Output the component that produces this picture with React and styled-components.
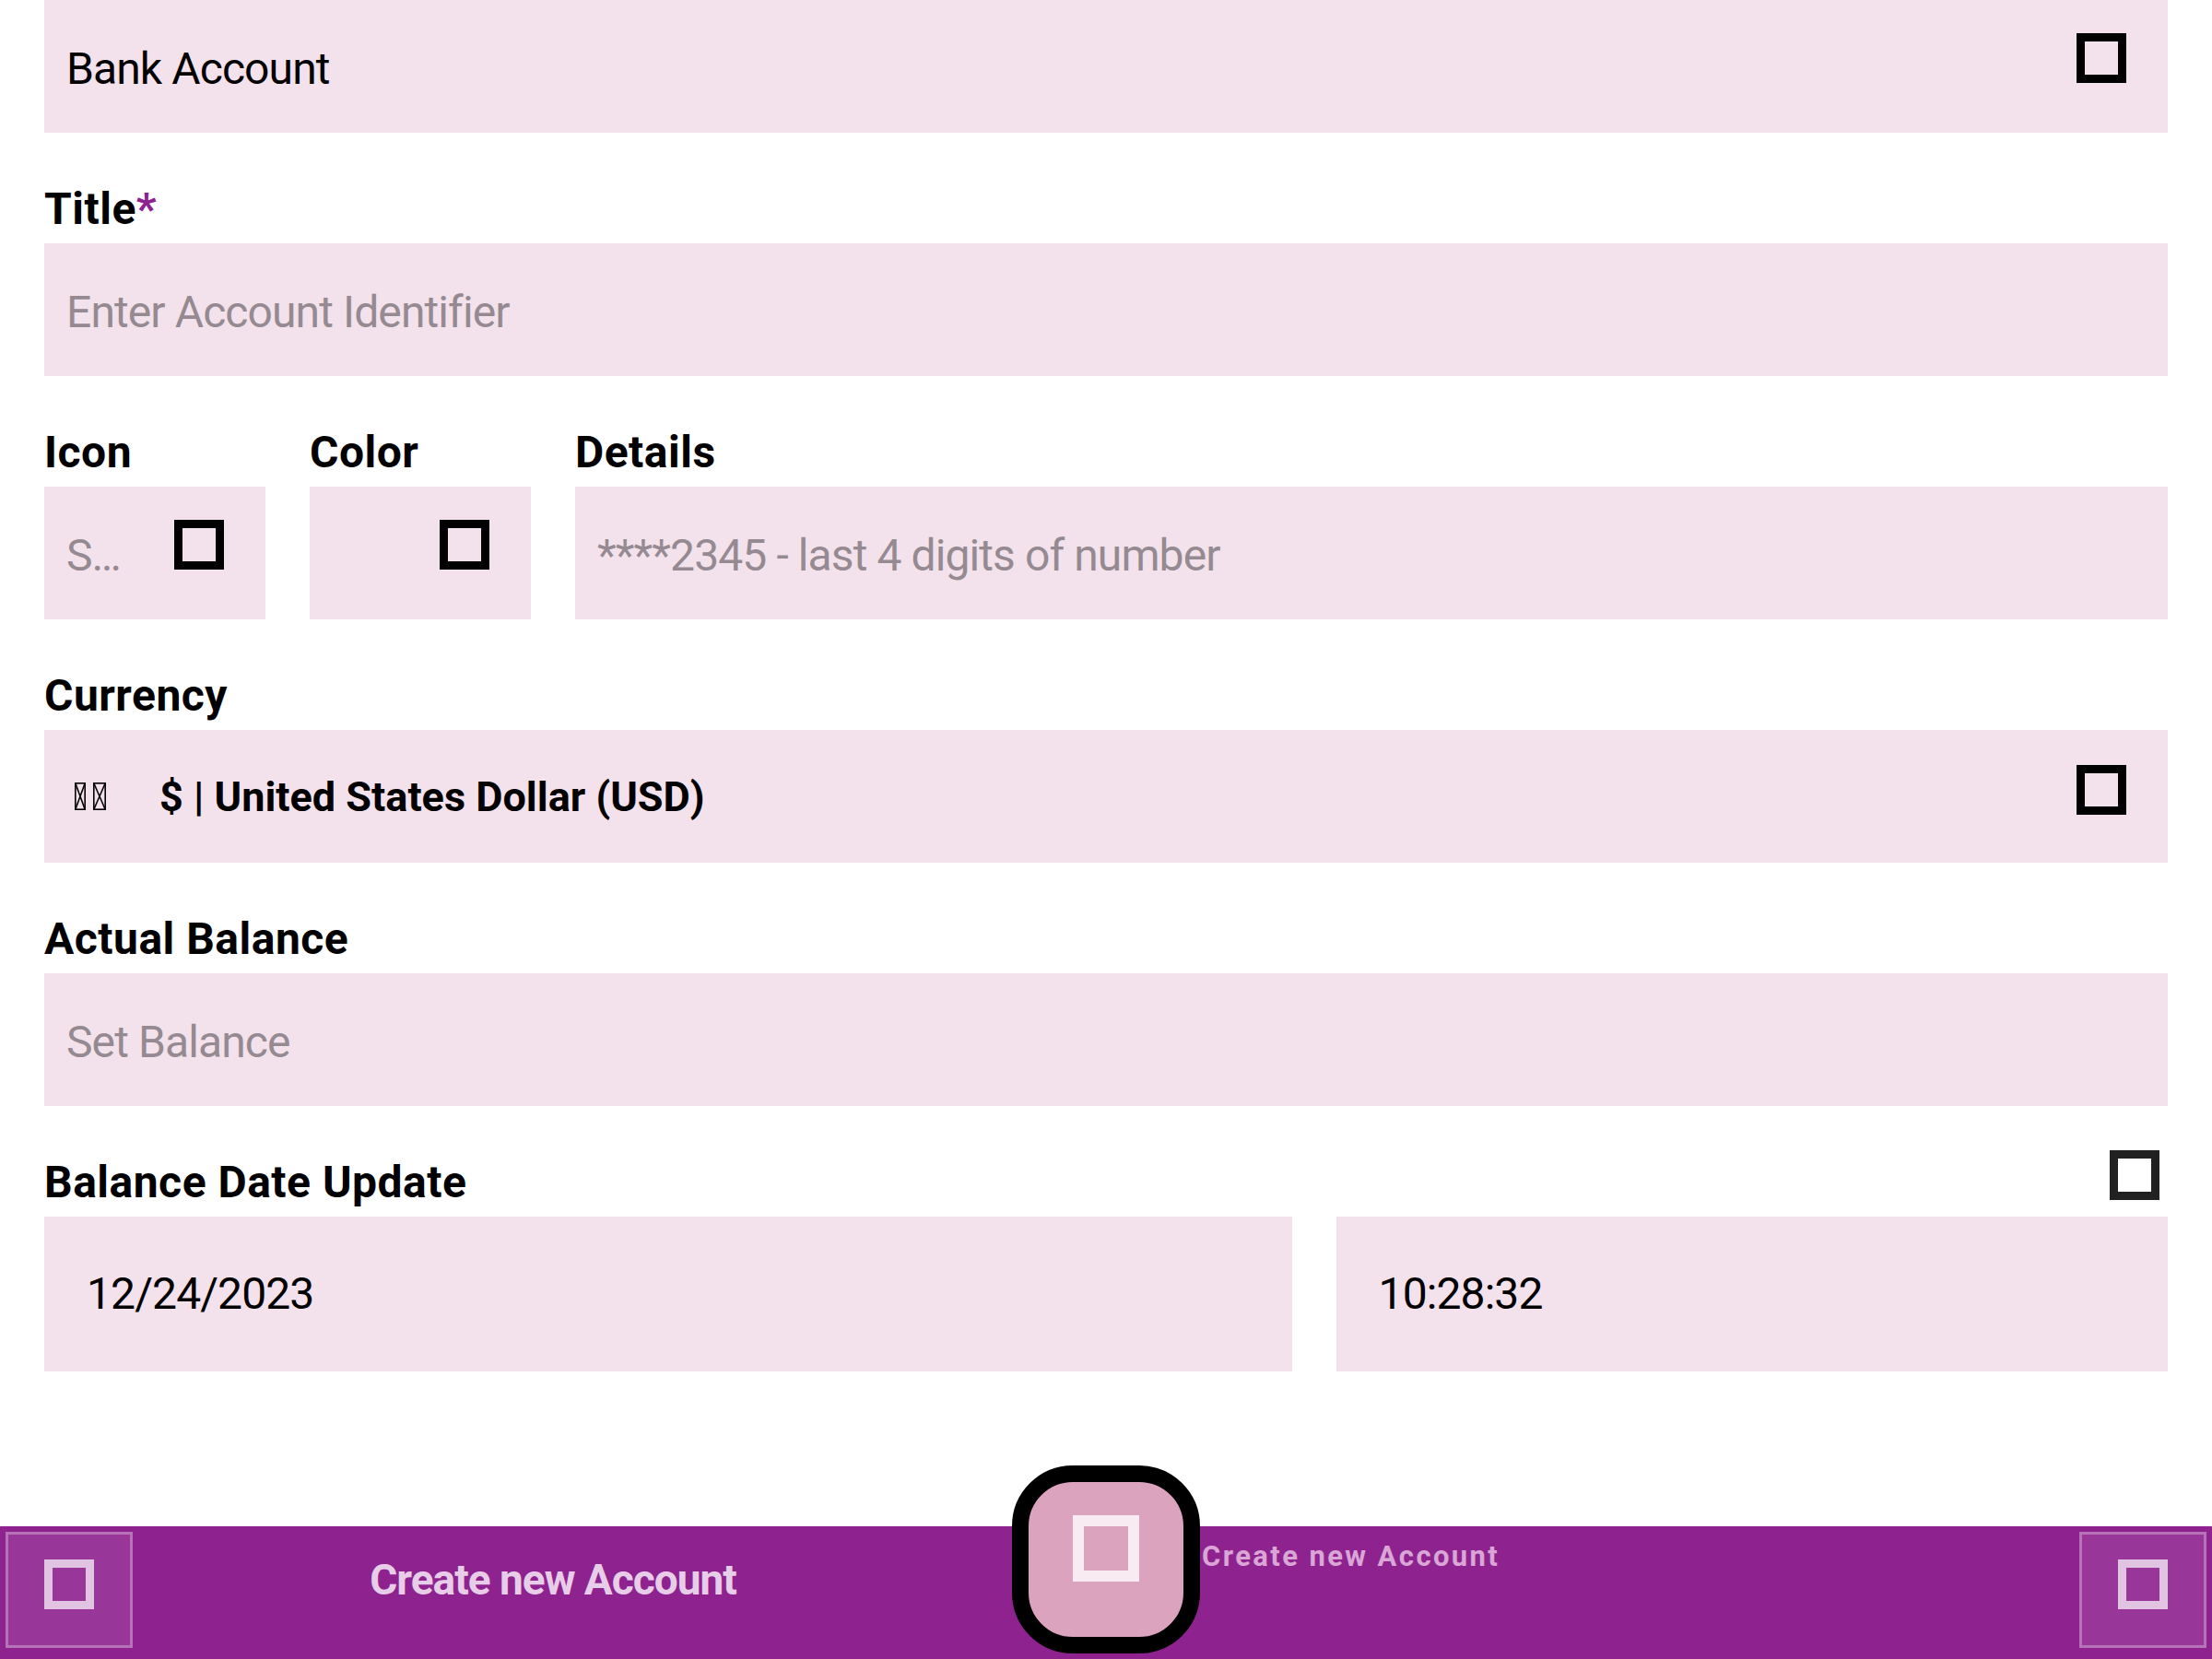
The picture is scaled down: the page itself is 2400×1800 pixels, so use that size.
import React from 'react';
import styled, { createGlobalStyle } from 'styled-components';

const GlobalStyle = createGlobalStyle`
  html, body {
    margin: 0;
    padding: 0;
    background: #ffffff;
  }
  body {
    font-family: Roboto, "Noto Sans", sans-serif;
  }
`;

const Screen = styled.div`
  height: 100vh;
  display: flex;
  flex-direction: column;
  overflow: hidden;
`;

const Form = styled.div`
  flex: 1;
  padding: 0 48px;
  display: flex;
  flex-direction: column;
  gap: 59px;
`;

const Row = styled.div`
  display: flex;
  gap: 48px;
`;

const Group = styled.div`
  display: flex;
  flex-direction: column;
  min-width: 0;
  flex: ${p => (p.$width ? `0 0 ${p.$width}px` : p.$grow ? `${p.$grow} 1 0` : 'none')};
`;

const LabelRow = styled.div`
  display: flex;
  justify-content: space-between;
  height: 48px;
  margin-bottom: 13px;
`;

const Label = styled.div`
  font-weight: 700;
  font-size: 48px;
  line-height: 48px;
  letter-spacing: 0.5px;
  color: #000;
  margin-bottom: 13px;
  white-space: nowrap;

  ${LabelRow} & {
    margin-bottom: 0;
  }
`;

const Required = styled.span`
  color: #8e2390;
`;

const Field = styled.div`
  box-sizing: border-box;
  height: ${p => (p.$tall ? 168 : 144)}px;
  background: #f3e2eb;
  display: flex;
  align-items: center;
  padding: ${p => (p.$tall ? '0 0 0 46px' : p.$flush ? '0 45px 0 24px' : '6px 45px 0 24px')};
`;

const FieldText = styled.div`
  flex: 1;
  min-width: 0;
  font-size: ${p => (p.$strong ? 45 : 48)}px;
  line-height: ${p => (p.$strong ? 45 : 48)}px;
  font-weight: ${p => (p.$strong ? 700 : 400)};
  letter-spacing: ${p => (p.$strong ? '0px' : '-0.9px')};
  color: ${p => (p.$placeholder ? '#958a91' : '#000')};
  white-space: nowrap;
`;

const TofuIcon = styled.div`
  flex: none;
  box-sizing: border-box;
  width: 54px;
  height: 54px;
  border: 9px solid ${p => p.$color || '#000'};
  align-self: flex-start;
  margin-top: ${p => (p.$top != null ? p.$top : 30)}px;
  margin-right: ${p => p.$right || 0}px;
`;

const Flag = styled.svg`
  flex: none;
  margin-left: 9px;
  margin-right: 58px;
`;

const BottomBar = styled.div`
  flex: none;
  position: relative;
  height: 144px;
  background: #8e2390;
  display: grid;
  grid-template-columns: 1fr 1fr;
`;

const BarHalf = styled.div`
  display: grid;
  padding: 6px;

  & > * {
    grid-area: 1 / 1;
  }
`;

const NavBox = styled.div`
  box-sizing: border-box;
  width: 138px;
  height: 126px;
  border: 3px solid rgba(255, 255, 255, 0.3);
  background: rgba(255, 255, 255, 0.09);
  justify-self: ${p => (p.$end ? 'end' : 'start')};
  display: flex;
  justify-content: center;
  padding-top: 27px;
`;

const NavGlyph = styled.div`
  box-sizing: border-box;
  width: 54px;
  height: 54px;
  border: 9px solid #e1c4e2;
`;

const BarTitle = styled.div`
  justify-self: center;
  align-self: start;
  margin-top: 29px;
  font-weight: 700;
  font-size: 46px;
  line-height: 46px;
  letter-spacing: -1px;
  color: #e8cde8;
  white-space: nowrap;
`;

const Fab = styled.div`
  position: absolute;
  top: -66px;
  left: calc(50% - 102px);
  display: flex;
  align-items: flex-start;
`;

const FabButton = styled.div`
  box-sizing: border-box;
  width: 204px;
  height: 204px;
  border: 18px solid #000;
  border-radius: 66px;
  background: #dba3bd;
  display: flex;
  justify-content: center;
  padding-top: 36px;
`;

const FabGlyph = styled.div`
  box-sizing: border-box;
  width: 72px;
  height: 72px;
  border: 12px solid #f8ebf2;
`;

const FabLabel = styled.div`
  margin-top: 83px;
  margin-left: 2px;
  font-weight: 700;
  font-size: 31px;
  line-height: 31px;
  letter-spacing: 2.4px;
  color: #d9a6d6;
  white-space: nowrap;
`;

const FlagTofu = () => (
  <Flag width="34" height="30" viewBox="0 0 34 30">
    <g fill="none" stroke="#000" strokeWidth="1.6">
      <rect x="0.8" y="0.8" width="10.4" height="28.4" />
      <path d="M0.8 0.8 L11.2 29.2 M11.2 0.8 L0.8 29.2" />
      <rect x="20.8" y="0.8" width="12.4" height="28.4" />
      <path d="M20.8 0.8 L33.2 29.2 M33.2 0.8 L20.8 29.2" />
    </g>
  </Flag>
);

export default function App() {
  return (
    <Screen>
      <GlobalStyle />
      <Form>
        <Field>
          <FieldText>Bank Account</FieldText>
          <TofuIcon />
        </Field>

        <Group>
          <Label>
            Title<Required>*</Required>
          </Label>
          <Field>
            <FieldText $placeholder>Enter Account Identifier</FieldText>
          </Field>
        </Group>

        <Row>
          <Group $width={240}>
            <Label>Icon</Label>
            <Field>
              <FieldText $placeholder>S…</FieldText>
              <TofuIcon />
            </Field>
          </Group>
          <Group $width={240}>
            <Label>Color</Label>
            <Field>
              <FieldText />
              <TofuIcon />
            </Field>
          </Group>
          <Group $grow={1}>
            <Label>Details</Label>
            <Field>
              <FieldText $placeholder>****2345 - last 4 digits of number</FieldText>
            </Field>
          </Group>
        </Row>

        <Group>
          <Label>Currency</Label>
          <Field $flush>
            <FlagTofu />
            <FieldText $strong>$ | United States Dollar (USD)</FieldText>
            <TofuIcon $top={38} />
          </Field>
        </Group>

        <Group>
          <Label>Actual Balance</Label>
          <Field>
            <FieldText $placeholder>Set Balance</FieldText>
          </Field>
        </Group>

        <Group>
          <LabelRow>
            <Label>Balance Date Update</Label>
            <TofuIcon $color="#212121" $top={-11} $right={9} />
          </LabelRow>
          <Row>
            <Group $grow={3}>
              <Field $tall>
                <FieldText>12/24/2023</FieldText>
              </Field>
            </Group>
            <Group $grow={2}>
              <Field $tall>
                <FieldText>10:28:32</FieldText>
              </Field>
            </Group>
          </Row>
        </Group>
      </Form>

      <BottomBar>
        <BarHalf>
          <NavBox>
            <NavGlyph />
          </NavBox>
          <BarTitle>Create new Account</BarTitle>
        </BarHalf>
        <BarHalf>
          <NavBox $end>
            <NavGlyph />
          </NavBox>
        </BarHalf>
        <Fab>
          <FabButton>
            <FabGlyph />
          </FabButton>
          <FabLabel>Create new Account</FabLabel>
        </Fab>
      </BottomBar>
    </Screen>
  );
}
